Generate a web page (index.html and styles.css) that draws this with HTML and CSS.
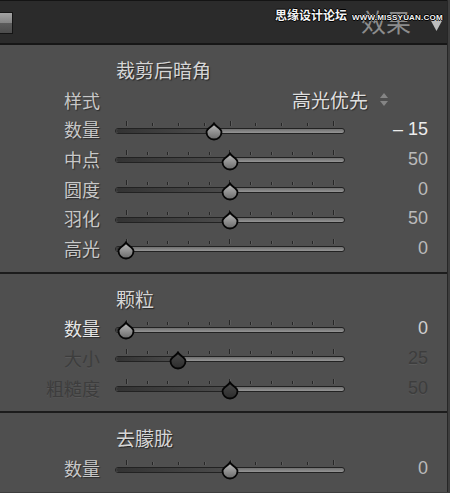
FILE: index.html
```html
<!DOCTYPE html>
<html lang="zh">
<head>
  <meta charset="UTF-8" />
  <title>效果</title>
  <link rel="stylesheet" href="styles.css">
</head>
<body>

  <!-- shared gradients for slider thumbs -->
  <svg class="defs" width="0" height="0">
    <defs>
      <linearGradient id="thumbOn" x1="0" y1="0" x2="0" y2="1">
        <stop offset="0" stop-color="#bcbcbc" />
        <stop offset="1" stop-color="#6a6a6a" />
      </linearGradient>
      <linearGradient id="thumbOff" x1="0" y1="0" x2="0" y2="1">
        <stop offset="0" stop-color="#4a4a4a" />
        <stop offset="1" stop-color="#2c2c2c" />
      </linearGradient>
    </defs>
  </svg>

  <div class="panel">

    <!-- HEADER -->
    <div class="panel-header">
      <div class="toggle"></div>
      <div class="header-right">
        <span class="panel-title">效果</span>
        <svg class="collapse" width="13" height="13" viewBox="0 0 13 13">
          <polygon points="0,0 13,0 6.5,12" fill="#bdbdbd" />
        </svg>
      </div>
      <div class="watermark">
        <span class="wm-cn">思缘设计论坛</span>
        <span class="wm-en">WWW.MISSYUAN.COM</span>
      </div>
    </div>

    <!-- 裁剪后暗角 -->
    <div class="section">
      <div class="section-title">裁剪后暗角</div>

      <div class="row">
        <span class="label">样式</span>
        <div class="select">
          <span>高光优先</span>
          <svg width="8" height="13" viewBox="0 0 8 13">
            <polygon points="4,0 8,5 0,5" fill="#858585" />
            <polygon points="0,8 8,8 4,13" fill="#858585" />
          </svg>
        </div>
      </div>

      <div class="row">
        <span class="label">数量</span>
        <div class="slider" style="--pos: 0.425">
          <div class="ticks">
            <span class="tick major"></span><span class="tick"></span><span class="tick"></span><span class="tick"></span><span class="tick major"></span><span class="tick"></span><span class="tick"></span><span class="tick"></span><span class="tick major"></span>
          </div>
          <div class="track"><div class="fill"></div></div>
          <svg class="thumb" viewBox="0 0 20 20"><path d="M10 1.5 C11.5 4.5 17.5 6.5 17.5 10 A7.5 7.5 0 0 1 2.5 10 C2.5 6.5 8.5 4.5 10 1.5 Z" fill="url(#thumbOn)" /></svg>
        </div>
        <span class="value active">&ndash; 15</span>
      </div>

      <div class="row">
        <span class="label">中点</span>
        <div class="slider" style="--pos: 0.5">
          <div class="ticks">
            <span class="tick major"></span><span class="tick"></span><span class="tick"></span><span class="tick"></span><span class="tick"></span><span class="tick major"></span><span class="tick"></span><span class="tick"></span><span class="tick"></span><span class="tick"></span><span class="tick major"></span>
          </div>
          <div class="track"><div class="fill"></div></div>
          <svg class="thumb" viewBox="0 0 20 20"><path d="M10 1.5 C11.5 4.5 17.5 6.5 17.5 10 A7.5 7.5 0 0 1 2.5 10 C2.5 6.5 8.5 4.5 10 1.5 Z" fill="url(#thumbOn)" /></svg>
        </div>
        <span class="value">50</span>
      </div>

      <div class="row">
        <span class="label">圆度</span>
        <div class="slider" style="--pos: 0.5">
          <div class="ticks">
            <span class="tick major"></span><span class="tick"></span><span class="tick"></span><span class="tick"></span><span class="tick"></span><span class="tick major"></span><span class="tick"></span><span class="tick"></span><span class="tick"></span><span class="tick"></span><span class="tick major"></span>
          </div>
          <div class="track"><div class="fill"></div></div>
          <svg class="thumb" viewBox="0 0 20 20"><path d="M10 1.5 C11.5 4.5 17.5 6.5 17.5 10 A7.5 7.5 0 0 1 2.5 10 C2.5 6.5 8.5 4.5 10 1.5 Z" fill="url(#thumbOn)" /></svg>
        </div>
        <span class="value">0</span>
      </div>

      <div class="row">
        <span class="label">羽化</span>
        <div class="slider" style="--pos: 0.5">
          <div class="ticks">
            <span class="tick major"></span><span class="tick"></span><span class="tick"></span><span class="tick"></span><span class="tick"></span><span class="tick major"></span><span class="tick"></span><span class="tick"></span><span class="tick"></span><span class="tick"></span><span class="tick major"></span>
          </div>
          <div class="track"><div class="fill"></div></div>
          <svg class="thumb" viewBox="0 0 20 20"><path d="M10 1.5 C11.5 4.5 17.5 6.5 17.5 10 A7.5 7.5 0 0 1 2.5 10 C2.5 6.5 8.5 4.5 10 1.5 Z" fill="url(#thumbOn)" /></svg>
        </div>
        <span class="value">50</span>
      </div>

      <div class="row">
        <span class="label">高光</span>
        <div class="slider" style="--pos: 0">
          <div class="ticks">
            <span class="tick major"></span><span class="tick"></span><span class="tick"></span><span class="tick"></span><span class="tick"></span><span class="tick major"></span><span class="tick"></span><span class="tick"></span><span class="tick"></span><span class="tick"></span><span class="tick major"></span>
          </div>
          <div class="track"><div class="fill"></div></div>
          <svg class="thumb" viewBox="0 0 20 20"><path d="M10 1.5 C11.5 4.5 17.5 6.5 17.5 10 A7.5 7.5 0 0 1 2.5 10 C2.5 6.5 8.5 4.5 10 1.5 Z" fill="url(#thumbOn)" /></svg>
        </div>
        <span class="value">0</span>
      </div>
    </div>

    <!-- 颗粒 -->
    <div class="section">
      <div class="section-title">颗粒</div>

      <div class="row">
        <span class="label bright">数量</span>
        <div class="slider" style="--pos: 0">
          <div class="ticks">
            <span class="tick major"></span><span class="tick"></span><span class="tick"></span><span class="tick"></span><span class="tick"></span><span class="tick major"></span><span class="tick"></span><span class="tick"></span><span class="tick"></span><span class="tick"></span><span class="tick major"></span>
          </div>
          <div class="track"><div class="fill"></div></div>
          <svg class="thumb" viewBox="0 0 20 20"><path d="M10 1.5 C11.5 4.5 17.5 6.5 17.5 10 A7.5 7.5 0 0 1 2.5 10 C2.5 6.5 8.5 4.5 10 1.5 Z" fill="url(#thumbOn)" /></svg>
        </div>
        <span class="value bright">0</span>
      </div>

      <div class="row disabled">
        <span class="label">大小</span>
        <div class="slider" style="--pos: 0.25">
          <div class="ticks">
            <span class="tick major"></span><span class="tick"></span><span class="tick"></span><span class="tick"></span><span class="tick"></span><span class="tick major"></span><span class="tick"></span><span class="tick"></span><span class="tick"></span><span class="tick"></span><span class="tick major"></span>
          </div>
          <div class="track"><div class="fill"></div></div>
          <svg class="thumb" viewBox="0 0 20 20"><path d="M10 1.5 C11.5 4.5 17.5 6.5 17.5 10 A7.5 7.5 0 0 1 2.5 10 C2.5 6.5 8.5 4.5 10 1.5 Z" fill="url(#thumbOff)" /></svg>
        </div>
        <span class="value">25</span>
      </div>

      <div class="row disabled">
        <span class="label">粗糙度</span>
        <div class="slider" style="--pos: 0.5">
          <div class="ticks">
            <span class="tick major"></span><span class="tick"></span><span class="tick"></span><span class="tick"></span><span class="tick"></span><span class="tick major"></span><span class="tick"></span><span class="tick"></span><span class="tick"></span><span class="tick"></span><span class="tick major"></span>
          </div>
          <div class="track"><div class="fill"></div></div>
          <svg class="thumb" viewBox="0 0 20 20"><path d="M10 1.5 C11.5 4.5 17.5 6.5 17.5 10 A7.5 7.5 0 0 1 2.5 10 C2.5 6.5 8.5 4.5 10 1.5 Z" fill="url(#thumbOff)" /></svg>
        </div>
        <span class="value">50</span>
      </div>
    </div>

    <!-- 去朦胧 -->
    <div class="section">
      <div class="section-title">去朦胧</div>

      <div class="row">
        <span class="label">数量</span>
        <div class="slider" style="--pos: 0.5">
          <div class="ticks">
            <span class="tick major"></span><span class="tick"></span><span class="tick"></span><span class="tick"></span><span class="tick major"></span><span class="tick"></span><span class="tick"></span><span class="tick"></span><span class="tick major"></span>
          </div>
          <div class="track"><div class="fill"></div></div>
          <svg class="thumb" viewBox="0 0 20 20"><path d="M10 1.5 C11.5 4.5 17.5 6.5 17.5 10 A7.5 7.5 0 0 1 2.5 10 C2.5 6.5 8.5 4.5 10 1.5 Z" fill="url(#thumbOn)" /></svg>
        </div>
        <span class="value">0</span>
      </div>
    </div>

  </div>

</body>
</html>
```

FILE: styles.css
```css
body {
  margin: 0;
  background-color: #3e3e3e;
  font-family: "Noto Sans CJK SC", "DejaVu Sans", sans-serif;
  overflow: hidden;
}

.defs {
  position: absolute;
}

.panel {
  width: 447px;
  background-color: #4f4f4f;
  border-right: 1px solid #262626;
}

/* Header bar */
.panel-header {
  position: relative;
  height: 42px;
  background-color: #2b2b2b;
  border-top: 1px solid #141414;
  border-bottom: 2px solid #161616;
  display: flex;
  align-items: center;
  justify-content: space-between;
}

.toggle {
  width: 12px;
  height: 20px;
  margin-top: 1px;
  border: 1px solid #141414;
  border-left: none;
  background: linear-gradient(#a3a3a3, #858585 48%, #5b5b5b 52%, #4c4c4c);
}

.header-right {
  display: flex;
  align-items: center;
  gap: 19px;
  padding-right: 4px;
}

.panel-title {
  font-size: 25px;
  line-height: 30px;
  margin-top: -3px;
  color: #8c8c8c;
}

.collapse {
  margin-top: 6px;
}

.watermark {
  position: absolute;
  top: 6px;
  left: 275px;
  display: flex;
  align-items: baseline;
  gap: 5px;
  color: #f4f4f4;
  text-shadow: 1px 0 0 #000, -1px 0 0 #000, 0 1px 0 #000, 0 -1px 0 #000;
}

.wm-cn {
  font-size: 12px;
  line-height: 16px;
  font-weight: bold;
}

.wm-en {
  font-family: "Liberation Sans", sans-serif;
  font-size: 8px;
  font-weight: bold;
  letter-spacing: 0.2px;
}

/* Sections */
.section {
  padding: 10px 0 9px;
}

.section + .section {
  border-top: 2px solid #1c1c1c;
}

.section-title {
  height: 30px;
  line-height: 30px;
  padding-left: 116px;
  font-size: 19px;
  color: #d6d6d6;
  text-shadow: 1px 1px 1px rgba(0, 0, 0, 0.55);
}

.row {
  display: grid;
  grid-template-columns: 100px 230px 1fr;
  column-gap: 15px;
  align-items: center;
  height: 29.6px;
  padding-right: 19px;
}

.label {
  text-align: right;
  font-size: 18px;
  line-height: 24px;
  color: #c8c8c8;
  white-space: nowrap;
  text-shadow: 1px 1px 1px rgba(0, 0, 0, 0.45);
}

.label.bright {
  color: #e6e6e6;
}

.value {
  text-align: right;
  font-family: "Liberation Sans", sans-serif;
  font-size: 18px;
  line-height: 24px;
  color: #bababa;
}

.value.active {
  color: #ececec;
}

.value.bright {
  color: #cfcfcf;
}

.disabled .label,
.disabled .value {
  color: #3d3d3d;
  text-shadow: 0 1px 0 rgba(255, 255, 255, 0.06);
}

.select {
  grid-column: 2 / 4;
  display: flex;
  align-items: center;
  justify-content: flex-end;
  gap: 12px;
  padding-right: 40px;
  font-size: 19px;
  line-height: 24px;
  color: #dedede;
  text-shadow: 1px 1px 1px rgba(0, 0, 0, 0.45);
}

/* Slider */
.slider {
  position: relative;
  padding-bottom: 4px;
}

.ticks {
  height: 5px;
  margin-bottom: 2px;
  padding: 0 11px;
  display: flex;
  justify-content: space-between;
  align-items: flex-end;
}

.tick {
  width: 1px;
  height: 3px;
  background-color: #262626;
  box-shadow: 1px 0 0 rgba(255, 255, 255, 0.08);
}

.tick.major {
  height: 5px;
}

.track {
  height: 4px;
  border: 1px solid #222;
  border-radius: 3px;
  background: linear-gradient(#6f6f6f, #959595);
  overflow: hidden;
}

.fill {
  height: 100%;
  width: calc(11px + var(--pos) * 207px);
  background: linear-gradient(to right, #333, #4c4c4c);
}

.thumb {
  position: absolute;
  top: 1.5px;
  left: calc(1px + var(--pos) * 207px);
  width: 20px;
  height: 20px;
}

.thumb path {
  stroke: #050505;
  stroke-width: 1.8;
}
```
